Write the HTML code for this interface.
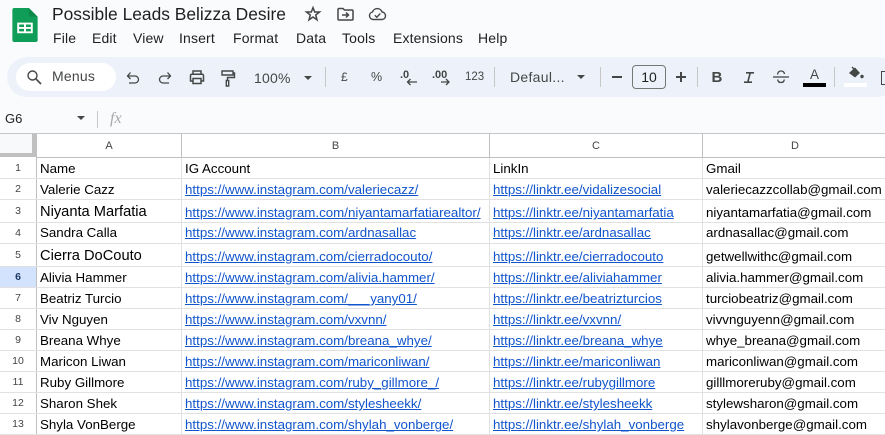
<!DOCTYPE html>
<html><head><meta charset="utf-8">
<style>
html,body{margin:0;padding:0}
body{width:885px;height:435px;overflow:hidden;position:relative;background:#f9fbfd;font-family:"Liberation Sans",sans-serif;color:#444746}
.a{position:absolute;white-space:nowrap}
.m{top:30px;font-size:14px;line-height:16px;color:#1f1f1f;letter-spacing:.15px}
.t{top:69px;line-height:16px;color:#444746}
svg{position:absolute;overflow:visible}
.sep{position:absolute;top:67px;width:1px;height:20px;background:#c7c7c7}
#g{position:absolute;left:0;top:134px;width:885px;height:301px;background:#fff}
.l{position:absolute;background:#e1e1e1}
.c{position:absolute;font-size:13.33px;line-height:21px;color:#000;white-space:nowrap}
.c a{color:#1155cc;text-decoration:underline}
.rn{position:absolute;left:0;width:36px;text-align:center;font-size:10.5px;color:#444;line-height:20px}
.ch{position:absolute;top:1px;text-align:center;font-size:11px;color:#444;line-height:22px}
</style></head><body>

<svg style="left:12px;top:8px" width="26" height="34" viewBox="0 0 26 35"><path d="M2 0H17L26 9V33a2 2 0 0 1-2 2H2a2 2 0 0 1-2-2V2a2 2 0 0 1 2-2Z" fill="#0f9d58"/><path d="M17 0L26 9H19a2 2 0 0 1-2-2Z" fill="#0c8a4c"/><path d="M5 15H21V26H5ZM7 17V19.500H12V17ZM14 17V19.500H19V17ZM7 21.500V24H12V21.500ZM14 21.500V24H19V21.500Z" fill="#fff" fill-rule="evenodd"/></svg>
<div class="a" style="left:52px;top:3px;font-size:17.4px;line-height:22px;color:#1f1f1f">Possible Leads Belizza Desire</div>
<svg style="left:305px;top:6px" width="16" height="16" viewBox="0 0 16 16"><path d="M8 1.700L9.700 6H14.500L10.700 9L12 13.800L8 11L4 13.800L5.300 9L1.500 6H6.300Z" fill="none" stroke="#444746" stroke-width="1.500"/></svg>
<svg style="left:337px;top:7px" width="17" height="14" viewBox="0 0 17 14"><path d="M1 2.500a1 1 0 0 1 1-1H6L7.500 3H15a1 1 0 0 1 1 1v8a1 1 0 0 1-1 1H2a1 1 0 0 1-1-1Z" fill="none" stroke="#444746" stroke-width="1.500"/><path d="M5 8H11M9 5.500L11.500 8L9 10.500" fill="none" stroke="#444746" stroke-width="1.500"/></svg>
<svg style="left:368px;top:7px" width="19" height="14" viewBox="0 0 19 14"><path d="M5 12.500a3.800 3.800 0 0 1-.5-7.500a5 5 0 0 1 9.500 0a3.800 3.800 0 0 1 .5 7.500Z" fill="none" stroke="#444746" stroke-width="1.400"/><path d="M6.800 8.300L8.800 10.200L12.300 6.500" fill="none" stroke="#444746" stroke-width="1.400"/></svg>

<div class="a m" style="left:53px">File</div>
<div class="a m" style="left:92px">Edit</div>
<div class="a m" style="left:133px">View</div>
<div class="a m" style="left:179px">Insert</div>
<div class="a m" style="left:233px">Format</div>
<div class="a m" style="left:296px">Data</div>
<div class="a m" style="left:342px">Tools</div>
<div class="a m" style="left:393px">Extensions</div>
<div class="a m" style="left:478px">Help</div>

<div class="a" style="left:7px;top:57px;width:890px;height:40px;border-radius:20px;background:#edf2fa"></div>
<div class="a" style="left:16px;top:63px;width:100px;height:28px;border-radius:14px;background:#fff"></div>
<svg style="left:26px;top:69px" width="16" height="16" viewBox="0 0 16 16"><circle cx="6.500" cy="6.500" r="4.500" fill="none" stroke="#444746" stroke-width="1.400"/><path d="M10 10L15 15" stroke="#444746" stroke-width="1.600"/></svg>
<div class="a t" style="left:52px;top:68px;font-size:14px;letter-spacing:.2px">Menus</div>
<svg style="left:126px;top:71px" width="14" height="14" viewBox="0 0 14 14"><path d="M1.500 5H9a3.500 3.500 0 0 1 0 7H3M4.500 1.500L1.500 5L4.500 8" fill="none" stroke="#444746" stroke-width="1.300"/></svg>
<svg style="left:158px;top:71px" width="14" height="14" viewBox="0 0 14 14"><path d="M12.500 5H5a3.500 3.500 0 0 0 0 7H11M9.500 1.500L12.500 5L9.500 8" fill="none" stroke="#444746" stroke-width="1.300"/></svg>
<svg style="left:189px;top:70px" width="16" height="15" viewBox="0 0 16 15"><path d="M4 4V1H12V4M4 11H1.500V5.500a1.200 1.200 0 0 1 1.200-1.200H13.300a1.200 1.200 0 0 1 1.200 1.200V11H12M4 8.500H12V13.500H4Z" fill="none" stroke="#444746" stroke-width="1.500"/></svg>
<svg style="left:221px;top:70px" width="14" height="17" viewBox="0 0 14 17"><path d="M1 1H12V5H1ZM12 3H13.500V7.500H6.500V10.500M5.300 10.500H7.700V16H5.300Z" fill="none" stroke="#444746" stroke-width="1.400"/></svg>
<div class="a t" style="left:254px;font-size:14px;top:70px;letter-spacing:.2px">100%</div>
<div class="a" style="left:304px;top:76px;border:4px solid transparent;border-top:4.500px solid #444746;border-bottom:0"></div>
<div class="sep" style="left:325px"></div>
<div class="a t" style="left:341px;font-size:12px;top:69px">£</div>
<div class="a t" style="left:371px;font-size:12.500px;top:69px">%</div>
<div class="a t" style="left:400px;font-size:11px;top:67px;font-weight:bold">.0</div>
<svg style="left:406px;top:78px" width="12" height="8" viewBox="0 0 12 8"><path d="M11 4H2M4.500 1L1.500 4L4.500 7" fill="none" stroke="#444746" stroke-width="1.300"/></svg>
<div class="a t" style="left:432px;font-size:11px;top:67px;font-weight:bold">.00</div>
<svg style="left:441px;top:78px" width="9" height="8" viewBox="0 0 9 8"><path d="M0 4H7M5 1L8 4L5 7" fill="none" stroke="#444746" stroke-width="1.300"/></svg>
<div class="a t" style="left:465px;font-size:11.500px;top:69px">123</div>
<div class="sep" style="left:494px"></div>
<div class="a t" style="left:510px;font-size:14px;top:69px;letter-spacing:.3px">Defaul...</div>
<div class="a" style="left:577px;top:75px;border:4px solid transparent;border-top:4.500px solid #444746;border-bottom:0"></div>
<div class="sep" style="left:600px"></div>
<div class="a" style="left:612px;top:76px;width:10px;height:1.500px;background:#444746"></div>
<div class="a" style="left:632px;top:65px;width:32px;height:22px;border:1px solid #747775;border-radius:4px;text-align:center;font-size:14px;line-height:22px;color:#1f1f1f">10</div>
<div class="a" style="left:676px;top:76px;width:10px;height:1.500px;background:#444746"></div>
<div class="a" style="left:680.300px;top:71.500px;width:1.500px;height:10.500px;background:#444746"></div>
<div class="sep" style="left:697px"></div>
<div class="a" style="left:711.500px;top:69px;font-size:15px;line-height:17px;font-weight:bold;color:#444746">B</div>
<svg style="left:744px;top:72px" width="10" height="11" viewBox="0 0 10 11"><path d="M2 0.800H10M0 10.200H8M6.200 0.800L3.800 10.200" fill="none" stroke="#444746" stroke-width="1.600"/></svg>
<svg style="left:773px;top:70px" width="16" height="14" viewBox="0 0 16 14"><path d="M0 7H16" stroke="#444746" stroke-width="1.300"/><path d="M4.500 4.500Q5 1 8 1T11.500 4M4.700 9.500Q5 12.500 8 12.500T11.300 9.500" fill="none" stroke="#444746" stroke-width="1.300"/></svg>
<div class="a" style="left:810px;top:68px;font-size:13.500px;line-height:14px;color:#444746">A</div>
<div class="a" style="left:803px;top:83px;width:23px;height:4px;background:#000"></div>
<div class="sep" style="left:834px"></div>
<svg style="left:847px;top:66px" width="18" height="15" viewBox="0 0 18 15"><path d="M2 7L8 1.500L13 7L8 11.500Z" fill="#444746"/><path d="M5 1L7 3" stroke="#444746" stroke-width="1.300"/><circle cx="15" cy="10.500" r="1.700" fill="#444746"/></svg>
<div class="a" style="left:844px;top:83px;width:23px;height:4px;background:#fff"></div>
<div class="a" style="left:881px;top:71px;width:6px;height:14px;border:1.500px solid #444746;box-sizing:border-box"></div>

<div class="a" style="left:5px;top:111px;font-size:13px;line-height:15px;color:#1f1f1f">G6</div>
<div class="a" style="left:77px;top:116px;border:4px solid transparent;border-top:4.500px solid #444746;border-bottom:0"></div>
<div class="a" style="left:97px;top:111px;width:1px;height:17px;background:#c7c7c7"></div>
<div class="a" style="left:110px;top:111px;font-family:'Liberation Serif',serif;font-style:italic;font-size:16px;line-height:16px;color:#a8a8a8">fx</div>

<div id="g">
<div class="l" style="left:0;top:-1px;width:885px;height:1px;background:#c4c7c5"></div>
<div class="a" style="left:0;top:0;width:32px;height:19px;background:#f8f9fa;border-right:4px solid #c0c0c0;border-bottom:4px solid #c0c0c0"></div>
<div class="ch" style="left:37px;width:144px">A</div>
<div class="ch" style="left:182px;width:307px">B</div>
<div class="ch" style="left:490px;width:212px">C</div>
<div class="ch" style="left:703px;width:184px">D</div>
<div class="l" style="left:37px;top:23px;width:848px;height:1px;background:#c0c0c0"></div>
<div class="l" style="left:36px;top:0;width:1px;height:301px;background:#c0c0c0"></div>
<div class="l" style="left:181px;top:0;width:1px;height:24px;background:#c0c0c0"></div>
<div class="l" style="left:489px;top:0;width:1px;height:24px;background:#c0c0c0"></div>
<div class="l" style="left:702px;top:0;width:1px;height:24px;background:#c0c0c0"></div>
<div class="l" style="left:181px;top:24px;width:1px;height:277px"></div>
<div class="l" style="left:489px;top:24px;width:1px;height:277px"></div>
<div class="l" style="left:702px;top:24px;width:1px;height:277px"></div>

<div class="l" style="left:0;top:44px;width:885px;height:1px"></div>
<div class="l" style="left:0;top:65px;width:885px;height:1px"></div>
<div class="l" style="left:0;top:88px;width:885px;height:1px"></div>
<div class="l" style="left:0;top:109px;width:885px;height:1px"></div>
<div class="l" style="left:0;top:132px;width:885px;height:1px"></div>
<div class="l" style="left:0;top:153px;width:885px;height:1px"></div>
<div class="l" style="left:0;top:174px;width:885px;height:1px"></div>
<div class="l" style="left:0;top:195px;width:885px;height:1px"></div>
<div class="l" style="left:0;top:216px;width:885px;height:1px"></div>
<div class="l" style="left:0;top:237px;width:885px;height:1px"></div>
<div class="l" style="left:0;top:258px;width:885px;height:1px"></div>
<div class="l" style="left:0;top:279px;width:885px;height:1px"></div>
<div class="l" style="left:0;top:300px;width:885px;height:1px"></div>

<div class="a" style="left:0;top:133px;width:36px;height:20px;background:#d3e3fd"></div>

<div class="rn" style="top:24px">1</div>
<div class="rn" style="top:45px">2</div>
<div class="rn" style="top:67px">3</div>
<div class="rn" style="top:89px">4</div>
<div class="rn" style="top:111px">5</div>
<div class="rn" style="top:133px;font-weight:bold;color:#1f3b66">6</div>
<div class="rn" style="top:154px">7</div>
<div class="rn" style="top:175px">8</div>
<div class="rn" style="top:196px">9</div>
<div class="rn" style="top:217px">10</div>
<div class="rn" style="top:238px">11</div>
<div class="rn" style="top:259px">12</div>
<div class="rn" style="top:280px">13</div>

<div class="c" style="left:40px;top:24px">Name</div><div class="c" style="left:185px;top:24px">IG Account</div><div class="c" style="left:493px;top:24px">LinkIn</div><div class="c" style="left:706px;top:24px">Gmail</div>

<div class="c" style="left:40px;top:45px">Valerie Cazz</div><div class="c" style="left:185px;top:45px"><a>https://www.instagram.com/valeriecazz/</a></div><div class="c" style="left:493px;top:45px"><a>https://linktr.ee/vidalizesocial</a></div><div class="c" style="left:706px;top:45px">valeriecazzcollab@gmail.com</div>

<div class="c" style="left:40px;top:67px;font-size:14.67px;line-height:23px">Niyanta Marfatia</div><div class="c" style="left:185px;top:68px"><a>https://www.instagram.com/niyantamarfatiarealtor/</a></div><div class="c" style="left:493px;top:68px"><a>https://linktr.ee/niyantamarfatia</a></div><div class="c" style="left:706px;top:68px">niyantamarfatia@gmail.com</div>

<div class="c" style="left:40px;top:88px">Sandra Calla</div><div class="c" style="left:185px;top:88px"><a>https://www.instagram.com/ardnasallac</a></div><div class="c" style="left:493px;top:88px"><a>https://linktr.ee/ardnasallac</a></div><div class="c" style="left:706px;top:88px">ardnasallac@gmail.com</div>

<div class="c" style="left:40px;top:111px;font-size:14.67px;line-height:23px">Cierra DoCouto</div><div class="c" style="left:185px;top:112px"><a>https://www.instagram.com/cierradocouto/</a></div><div class="c" style="left:493px;top:112px"><a>https://linktr.ee/cierradocouto</a></div><div class="c" style="left:706px;top:112px">getwellwithc@gmail.com</div>

<div class="c" style="left:40px;top:133px">Alivia Hammer</div><div class="c" style="left:185px;top:133px"><a>https://www.instagram.com/alivia.hammer/</a></div><div class="c" style="left:493px;top:133px"><a>https://linktr.ee/aliviahammer</a></div><div class="c" style="left:706px;top:133px">alivia.hammer@gmail.com</div>

<div class="c" style="left:40px;top:154px">Beatriz Turcio</div><div class="c" style="left:185px;top:154px"><a>https://www.instagram.com/___yany01/</a></div><div class="c" style="left:493px;top:154px"><a>https://linktr.ee/beatrizturcios</a></div><div class="c" style="left:706px;top:154px">turciobeatriz@gmail.com</div>

<div class="c" style="left:40px;top:175px">Viv Nguyen</div><div class="c" style="left:185px;top:175px"><a>https://www.instagram.com/vxvnn/</a></div><div class="c" style="left:493px;top:175px"><a>https://linktr.ee/vxvnn/</a></div><div class="c" style="left:706px;top:175px">vivvnguyenn@gmail.com</div>

<div class="c" style="left:40px;top:196px">Breana Whye</div><div class="c" style="left:185px;top:196px"><a>https://www.instagram.com/breana_whye/</a></div><div class="c" style="left:493px;top:196px"><a>https://linktr.ee/breana_whye</a></div><div class="c" style="left:706px;top:196px">whye_breana@gmail.com</div>

<div class="c" style="left:40px;top:217px">Maricon Liwan</div><div class="c" style="left:185px;top:217px"><a>https://www.instagram.com/mariconliwan/</a></div><div class="c" style="left:493px;top:217px"><a>https://linktr.ee/mariconliwan</a></div><div class="c" style="left:706px;top:217px">mariconliwan@gmail.com</div>

<div class="c" style="left:40px;top:238px">Ruby Gillmore</div><div class="c" style="left:185px;top:238px"><a>https://www.instagram.com/ruby_gillmore_/</a></div><div class="c" style="left:493px;top:238px"><a>https://linktr.ee/rubygillmore</a></div><div class="c" style="left:706px;top:238px">gilllmoreruby@gmail.com</div>

<div class="c" style="left:40px;top:259px">Sharon Shek</div><div class="c" style="left:185px;top:259px"><a>https://www.instagram.com/stylesheekk/</a></div><div class="c" style="left:493px;top:259px"><a>https://linktr.ee/stylesheekk</a></div><div class="c" style="left:706px;top:259px">stylewsharon@gmail.com</div>

<div class="c" style="left:40px;top:280px">Shyla VonBerge</div><div class="c" style="left:185px;top:280px"><a>https://www.instagram.com/shylah_vonberge/</a></div><div class="c" style="left:493px;top:280px"><a>https://linktr.ee/shylah_vonberge</a></div><div class="c" style="left:706px;top:280px">shylavonberge@gmail.com</div>
</div>
</body></html>
